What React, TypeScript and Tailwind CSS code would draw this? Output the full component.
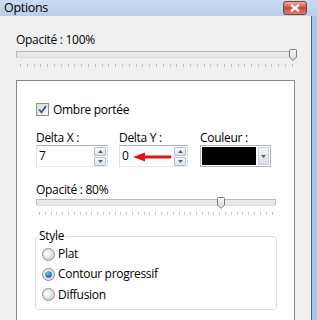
import React from "react";

const Thumb = () => (
  <svg width="8" height="12" viewBox="0 0 8 12">
    <defs>
      <linearGradient id="tg" x1="0" y1="0" x2="0" y2="1">
        <stop offset="0" stopColor="#fbfbfb" />
        <stop offset="1" stopColor="#d6d6d6" />
      </linearGradient>
    </defs>
    <path
      d="M1.5 0.5h5a1 1 0 0 1 1 1v6.5l-3.5 3.5l-3.5-3.5v-6.5a1 1 0 0 1 1-1z"
      fill="url(#tg)"
      stroke="#7a7a7a"
    />
  </svg>
);

const Slider = ({ thumbLeft, tickPad }: { thumbLeft: string; tickPad: string }) => (
  <div className="flex flex-col">
    <div className="relative h-[7px] border border-[#b9b9b9] border-b-[#dcdcdc] bg-[#e7e8e8]">
      <div className={`absolute top-[-3px] ${thumbLeft}`}>
        <Thumb />
      </div>
    </div>
    <div className={`mt-[6px] flex h-[3px] justify-between ${tickPad}`}>
      {Array.from({ length: 41 }).map((_, i) => (
        <div key={i} className="h-[3px] w-px bg-[#c2c2c2]" />
      ))}
    </div>
  </div>
);

const Spin = () => (
  <div className="flex flex-col gap-px">
    {[0, 1].map((i) => (
      <div
        key={i}
        className="flex h-[9px] w-[12px] items-center justify-center rounded-[1px] border border-[#b6bdc6] bg-gradient-to-b from-[#f6f7f9] to-[#dfe4ea]"
      >
        <svg width="5" height="3" viewBox="0 0 5 3">
          <path d={i === 0 ? "M2.5 0L5 3H0z" : "M0 0h5L2.5 3z"} fill="#4d6185" />
        </svg>
      </div>
    ))}
  </div>
);

const NumInput = ({ value, children }: { value: string; children?: React.ReactNode }) => (
  <div className="relative flex h-[22px] items-center justify-between border border-[#abadb3] border-b-[#e3e9ef] border-l-[#e2e3ea] border-r-[#dbdfe6] bg-white pl-[2px] pr-[1px]">
    <span className="leading-[16px]">{value}</span>
    <Spin />
    {children}
  </div>
);

const Radio = ({ checked }: { checked?: boolean }) => (
  <svg width="13" height="13" viewBox="0 0 13 13">
    <defs>
      <radialGradient id="rg" cx="0.4" cy="0.4" r="0.7">
        <stop offset="0" stopColor="#ffffff" />
        <stop offset="1" stopColor="#c9cccf" />
      </radialGradient>
      <radialGradient id="rb" cx="0.4" cy="0.35" r="0.7">
        <stop offset="0" stopColor="#8ad0f8" />
        <stop offset="0.6" stopColor="#2b7ac2" />
        <stop offset="1" stopColor="#16457a" />
      </radialGradient>
    </defs>
    <circle cx="6.5" cy="6.5" r="6" fill="url(#rg)" stroke="#8d9194" />
    {checked && <circle cx="6.5" cy="6.5" r="3.2" fill="url(#rb)" />}
  </svg>
);

export default function App() {
  return (
    <div className="flex h-[320px] w-[317px] flex-col overflow-hidden font-['Open_Sans',sans-serif] text-[12px] tracking-[-0.3px] text-black">
      <div className="flex h-[20px] items-center justify-between bg-gradient-to-b from-[#c8dcf2] to-[#b8cee9] pl-[4px]">
        <span className="text-[12.5px] leading-[16px]">Options</span>
        <div className="mr-[10px] flex h-[14px] w-[24px] items-center justify-center rounded-[3px] border border-[#8a3b35] bg-gradient-to-b from-[#eab0a6] via-[#c9463a] to-[#d8806f]">
          <svg width="10" height="8" viewBox="0 0 10 8">
            <path d="M1 0.8l8 6.4M9 0.8l-8 6.4" stroke="white" strokeWidth="2.2" />
          </svg>
        </div>
      </div>
      <div className="flex flex-1">
        <div className="flex flex-1 flex-col bg-[#f0f0f0] px-[16px] pt-[16px]">
          <div className="leading-[16px]">Opacité : 100%</div>
          <div className="mt-[3px]">
            <Slider thumbLeft="left-[272px]" tickPad="pl-[4px] pr-[2px]" />
          </div>
          <div className="mt-[13px] flex h-[260px] flex-col border border-[#828790] bg-white pl-[19px] pt-[22px]">
            <div className="flex h-[13px] items-center gap-[4px]">
              <div className="flex h-[13px] w-[13px] items-center justify-center border border-[#8e8f8f] bg-gradient-to-br from-[#dcdcdc] to-[#f8f8f8]">
                <svg width="9" height="9" viewBox="0 0 9 9">
                  <path d="M1 4.5l2.5 2.8L8 1" fill="none" stroke="#3b5898" strokeWidth="1.8" />
                </svg>
              </div>
              <span className="leading-[16px]">Ombre portée</span>
            </div>
            <div className="mt-[14px] flex">
              <div className="flex w-[72px] flex-col">
                <span className="leading-[15px]">Delta X :</span>
                <NumInput value="7" />
              </div>
              <div className="ml-[11px] flex w-[69px] flex-col">
                <span className="leading-[15px]">Delta Y :</span>
                <NumInput value="0">
                  <svg className="absolute left-[13px] top-[6px]" width="38" height="10" viewBox="0 0 38 10">
                    <path d="M0 5L12 0.5V9.5z" fill="#e3120c" />
                    <path d="M10 5H38" stroke="#e3120c" strokeWidth="3" />
                  </svg>
                </NumInput>
              </div>
              <div className="ml-[12px] flex w-[71px] flex-col">
                <span className="leading-[15px]">Couleur :</span>
                <div className="flex h-[22px] items-center gap-[2px] border border-[#adb2b5] bg-white p-px">
                  <div className="h-full flex-1 bg-black" />
                  <div className="flex h-full w-[11px] items-center justify-center border border-[#c9d0d8] bg-gradient-to-b from-[#f2f4f6] to-[#d9dfe6]">
                    <svg width="5" height="3" viewBox="0 0 5 3">
                      <path d="M0 0h5L2.5 3z" fill="#4d6185" />
                    </svg>
                  </div>
                </div>
              </div>
            </div>
            <div className="mt-[15px] leading-[16px]">Opacité : 80%</div>
            <div className="mt-px w-[240px]">
              <Slider thumbLeft="left-[180px]" tickPad="px-[3px]" />
            </div>
            <fieldset className="ml-[-1px] mt-[13px] w-[242px] rounded-[3px] border border-[#d5dfe5] pb-[4px] pl-[6px]">
              <legend className="ml-[-5px] px-[2px] leading-[16px]">Style</legend>
              <div className="flex h-[20px] items-center gap-[3px]">
                <Radio />
                <span className="leading-[16px]">Plat</span>
              </div>
              <div className="flex h-[20px] items-center gap-[3px]">
                <Radio checked />
                <span className="leading-[16px]">Contour progressif</span>
              </div>
              <div className="flex h-[21px] items-center gap-[3px]">
                <Radio />
                <span className="leading-[16px]">Diffusion</span>
              </div>
            </fieldset>
          </div>
        </div>
        <div className="w-px bg-[#4a6486]" />
        <div className="w-[5px] bg-[#a9c7e8]" />
      </div>
    </div>
  );
}
